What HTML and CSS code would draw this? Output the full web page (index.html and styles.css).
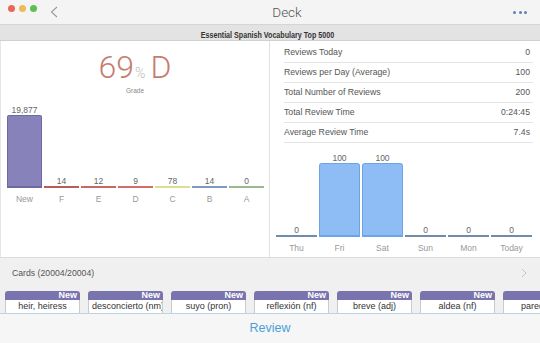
FILE: index.html
```html
<!DOCTYPE html>
<html>
<head>
<meta charset="utf-8">
<link rel="stylesheet" href="styles.css">
</head>
<body>
<div class="window">
  <header class="titlebar">
    <div class="lights"><span class="light red"></span><span class="light yellow"></span><span class="light green"></span></div>
    <svg class="back" width="9" height="12" viewBox="0 0 9 12"><path d="M7 1 L1.5 6 L7 11" fill="none" stroke="#9a9a9a" stroke-width="1.1"/></svg>
    <div class="title">Deck</div>
    <div class="more"><span></span><span></span><span></span></div>
  </header>
  <div class="subtitle"><span>Essential Spanish Vocabulary Top 5000</span></div>
  <main class="panels">
    <section class="grade-panel">
      <div class="grade"><span class="num">69</span><span class="pct">%</span><span class="letter">D</span></div>
      <div class="grade-label">Grade</div>
      <div class="chart grades">
        <div class="col"><span class="val">19,877</span><div class="bar new" style="height:73px"></div><span class="lbl">New</span></div>
        <div class="col"><span class="val">14</span><div class="bar line f"></div><span class="lbl">F</span></div>
        <div class="col"><span class="val">12</span><div class="bar line e"></div><span class="lbl">E</span></div>
        <div class="col"><span class="val">9</span><div class="bar line d"></div><span class="lbl">D</span></div>
        <div class="col"><span class="val">78</span><div class="bar line c"></div><span class="lbl">C</span></div>
        <div class="col"><span class="val">14</span><div class="bar line b"></div><span class="lbl">B</span></div>
        <div class="col"><span class="val">0</span><div class="bar line a"></div><span class="lbl">A</span></div>
      </div>
    </section>
    <section class="stats-panel">
      <ul class="stats">
        <li><span>Reviews Today</span><span>0</span></li>
        <li><span>Reviews per Day (Average)</span><span>100</span></li>
        <li><span>Total Number of Reviews</span><span>200</span></li>
        <li><span>Total Review Time</span><span>0:24:45</span></li>
        <li><span>Average Review Time</span><span>7.4s</span></li>
      </ul>
      <div class="chart days">
        <div class="col"><span class="val">0</span><div class="bar line day"></div><span class="lbl">Thu</span></div>
        <div class="col"><span class="val">100</span><div class="bar blue" style="height:74px"></div><span class="lbl">Fri</span></div>
        <div class="col"><span class="val">100</span><div class="bar blue" style="height:74px"></div><span class="lbl">Sat</span></div>
        <div class="col"><span class="val">0</span><div class="bar line day"></div><span class="lbl">Sun</span></div>
        <div class="col"><span class="val">0</span><div class="bar line day"></div><span class="lbl">Mon</span></div>
        <div class="col"><span class="val">0</span><div class="bar line day"></div><span class="lbl">Today</span></div>
      </div>
    </section>
  </main>
  <section class="cards">
    <div class="cards-head"><span>Cards (20004/20004)</span>
      <svg width="6" height="10" viewBox="0 0 6 10"><path d="M1 1 L5 5 L1 9" fill="none" stroke="#c4c4c4" stroke-width="1"/></svg>
    </div>
    <div class="card-row">
      <div class="card"><div class="card-top">New</div><div class="card-body">heir, heiress</div></div>
      <div class="card"><div class="card-top">New</div><div class="card-body left">desconcierto (nm)</div></div>
      <div class="card"><div class="card-top">New</div><div class="card-body">suyo (pron)</div></div>
      <div class="card"><div class="card-top">New</div><div class="card-body">reflexión (nf)</div></div>
      <div class="card"><div class="card-top">New</div><div class="card-body">breve (adj)</div></div>
      <div class="card"><div class="card-top">New</div><div class="card-body">aldea (nf)</div></div>
      <div class="card"><div class="card-top">New</div><div class="card-body">pared (nf)</div></div>
    </div>
  </section>
  <footer class="toolbar">Review</footer>
</div>
</body>
</html>
```
FILE: styles.css
```css
* { box-sizing: border-box; margin: 0; padding: 0; }
html, body { width: 540px; height: 343px; overflow: hidden; }
body { font-family: "Liberation Sans", Arial, sans-serif; color: #555; background: #fff; }

.window { display: grid; grid-template-rows: 24px 17px 217px 55px 30px; height: 343px; }

.titlebar { display: flex; align-items: center; background: #f4f4f4; padding: 0 12px 0 8px; }
.lights { display: flex; gap: 4px; align-self: flex-start; margin-top: 5px; }
.light { width: 7px; height: 7px; border-radius: 50%; }
.red { background: #e8675d; }
.yellow { background: #eebc52; }
.green { background: #5fbf52; }
.back { margin-left: 13px; margin-top: -1px; }
.title { flex: 1; text-align: center; padding-left: 2px; font-family: "Roboto", "Liberation Sans", sans-serif; font-weight: 300; font-size: 13.5px; color: #555; }
.more { display: flex; gap: 2.5px; margin-right: 1px; }
.more span { width: 3px; height: 3px; border-radius: 50%; background: #5c82b6; }

.subtitle { background: #e3e3e3; border-top: 1px solid #d4d4d4; border-bottom: 1px solid #d0d0d0; text-align: center; line-height: 15px; padding-right: 6px; }
.subtitle span { display: inline-block; font-weight: bold; font-size: 8.5px; color: #333; transform: scaleX(0.84); }

.panels { display: grid; grid-template-columns: 270px 1fr; background: #fff; border-bottom: 1px solid #dcdcdc; }
.grade-panel { border-right: 1px solid #e2e2e2; border-left: 1px solid #e6e6e6; display: flex; flex-direction: column; padding-top: 10px; }
.grade { text-align: center; font-family: "Roboto", "Liberation Sans", sans-serif; font-weight: 300; color: #c67d6f; line-height: 32px; height: 32px; }
.grade .num { font-size: 32px; }
.grade .pct { font-size: 14px; color: #b9b9b9; margin: 0 5px 0 1px; }
.grade .letter { font-size: 32px; }
.grade-label { text-align: center; font-size: 6.5px; color: #888; line-height: 12px; margin-top: 2px; }

.chart { display: flex; align-items: flex-end; }
.grades { height: 108px; padding-left: 6px; gap: 2px; }
.days { height: 111px; padding-left: 6px; gap: 2px; }
.col { display: flex; flex-direction: column; align-items: stretch; text-align: center; }
.grades .col { width: 35px; }
.days .col { width: 41px; }
.val { font-size: 8.5px; line-height: 10px; color: #666; }
.lbl { font-size: 8.5px; line-height: 12px; padding-top: 5px; height: 17px; color: #999; }
.bar { width: 100%; }
.bar.line { height: 2px; }
.bar.new { background: #8882ba; border: 1px solid #6f69a3; border-bottom-width: 2px; border-radius: 2px 2px 0 0; }
.f { background: #bc5c56; }
.e { background: #c86a64; }
.d { background: #cf6f68; }
.c { background: #dcdf8e; }
.b { background: #7d9bbf; }
.a { background: #9db78f; }
.day { background: #6f8cab; }
.bar.blue { background: #8dbdf4; border: 1px solid #6ea4e6; border-bottom-width: 2px; border-radius: 3px 3px 0 0; }

.stats-panel { display: flex; flex-direction: column; }
.stats { list-style: none; padding-top: 2px; margin: 0 7px 0 14px; }
.stats li { display: flex; justify-content: space-between; height: 20px; line-height: 19px; border-bottom: 1px solid #e4e4e4; font-size: 8.7px; color: #555; padding-right: 3px; }

.cards { background: #f0f0f0; overflow: hidden; }
.cards-head { display: flex; justify-content: space-between; align-items: center; height: 30px; padding: 0 13px 0 12px; font-size: 8.7px; color: #555; }
.card-row { display: flex; gap: 8px; padding-left: 5px; margin-top: 3px; }
.card { flex: 0 0 75px; width: 75px; overflow: hidden; }
.card-top { height: 9px; background: #7973ae; border-radius: 3px 3px 0 0; color: #fff; font-weight: bold; font-size: 9px; line-height: 9px; text-align: right; padding-right: 3px; }
.card-body { background: #fff; border: 1px solid #cacaca; border-top: 0; height: 24px; text-align: center; font-size: 9px; line-height: 13px; color: #333; white-space: nowrap; overflow: hidden; }
.card-body.left { text-align: left; padding-left: 3px; }

.toolbar { border-top: 1px solid #b7d4e8; background: #f6f6f6; text-align: center; line-height: 28px; font-size: 12.5px; color: #4c9fd9; }
```
